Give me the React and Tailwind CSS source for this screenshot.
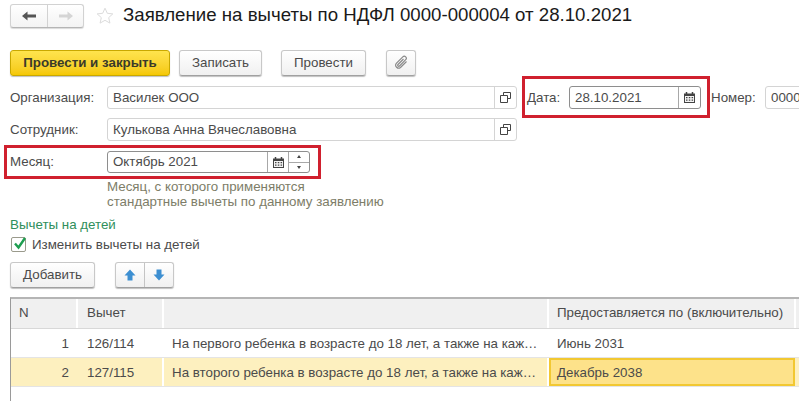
import React from "react";

const btn =
    "flex h-[26px] items-center justify-center rounded-[3px] border border-[#c8c8c8] border-b-[#a0a0a0] bg-gradient-to-b from-white to-[#f0f0f0] pb-[2px] text-[#4b4b4b] shadow-[0_1px_1px_rgba(0,0,0,0.25)]";

const CalendarIcon = () => (
    <svg width="13" height="13" viewBox="0 0 13 13" fill="none">
        <path d="M1 2.500h11v9.500H1z" fill="#444" />
        <path d="M3.500 1v2.500M9.500 1v2.500" stroke="#444" strokeWidth="1.500" />
        <path d="M2 5h9v6H2z" fill="#f4f4f4" />
        <path
            d="M3 6h1.500v1.300H3zM5.800 6h1.500v1.300H5.800zM8.600 6h1.500v1.300H8.600zM3 8.500h1.500v1.300H3zM5.800 8.500h1.500v1.300H5.800zM8.600 8.500h1.500v1.300H8.600z"
            fill="#444"
        />
    </svg>
);

const CopyIcon = () => (
    <svg width="11" height="11" viewBox="0 0 11 11" fill="none" stroke="#444" strokeWidth="1">
        <path d="M3.500 3V.5h7v6H8" />
        <path d="M.5 3.500h7v7h-7z" />
    </svg>
);

const TextField = ({ value, className = "" }) => (
    <div className={`flex h-[23px] shrink-0 items-center rounded-[3px] border border-[#d4d4d4] bg-white ${className}`}>
        <span className="flex-1 overflow-hidden whitespace-nowrap pb-[1px] pl-[5px] text-[#4b4b4b]">{value}</span>
        <span className="flex h-full w-[22px] items-center justify-center border-l border-[#d4d4d4]">
            <CopyIcon />
        </span>
    </div>
);

const ArrowButton = ({ up }) => (
    <span className="flex h-full flex-1 items-center justify-center">
        <svg width="12" height="12" viewBox="0 0 12 12" fill="#3d8fd1" className={up ? "" : "rotate-180"}>
            <path d="M6 0.500L11.500 6.500H8.500V11.500H3.500V6.500H0.500z" />
        </svg>
    </span>
);

const rows = [
    { n: 1, code: "126/114", text: "На первого ребенка в возрасте до 18 лет, а также на каж…", until: "Июнь 2031" },
    { n: 2, code: "127/115", text: "На второго ребенка в возрасте до 18 лет, а также на каж…", until: "Декабрь 2038", active: true },
];

const App = () => {
    return (
        <div
            className="relative h-[401px] w-[799px] overflow-hidden bg-white pl-[10px] text-[13.33px] leading-[15px] text-[#4b4b4b]"
            style={{ fontFamily: '"Liberation Sans", Arial, sans-serif' }}
        >
            {/* Title row */}
            <div className="flex h-[28px] items-center pt-[4px]">
                <div className="flex h-[24px] w-[74px] shrink-0 rounded-[3px] border border-[#d2d2d2] border-b-[#b5b5b5] bg-gradient-to-b from-white to-[#f3f3f3] shadow-[0_1px_1px_rgba(0,0,0,0.15)]">
                    <span className="flex w-[37px] items-center justify-center border-r border-[#d2d2d2]">
                        <svg width="14" height="10" viewBox="0 0 14 10" fill="#555">
                            <path d="M0 5l5.500-4.500V3.500H14v3H5.500v3z" />
                        </svg>
                    </span>
                    <span className="flex flex-1 items-center justify-center">
                        <svg width="14" height="10" viewBox="0 0 14 10" fill="#d5d5d5">
                            <path d="M14 5L8.500.5V3.500H0v3h8.500v3z" />
                        </svg>
                    </span>
                </div>
                <svg width="18" height="18" viewBox="0 0 18 18" fill="none" stroke="#dcdcdc" className="ml-[12px] shrink-0">
                    <path d="M9 1.200l2.300 5.100 5.500.6-4.100 3.700 1.200 5.500L9 13.300l-4.900 2.800 1.200-5.500L1.200 6.900l5.500-.6z" />
                </svg>
                <h1 className="mb-[2px] ml-[9px] whitespace-nowrap text-[18.67px] font-normal leading-[24px] text-[#1a1a1a]">
                    Заявление на вычеты по НДФЛ 0000-000004 от 28.10.2021
                </h1>
            </div>

            {/* Command bar */}
            <div className="mt-[22px] flex h-[26px]">
                <div className="flex h-[26px] w-[160px] items-center justify-center rounded-[3px] border border-[#c9a800] bg-gradient-to-b from-[#ffe44d] to-[#f5c800] pb-[2px] font-bold text-[#3a3a2a] shadow-[0_1px_1px_rgba(0,0,0,0.25)]">
                    Провести и закрыть
                </div>
                <div className={`${btn} ml-[9px] w-[83px]`}>Записать</div>
                <div className={`${btn} ml-[19px] w-[85px]`}>Провести</div>
                <div className={`${btn} ml-[20px] w-[30px] !pb-0`}>
                    <svg width="16" height="16" viewBox="0 0 16 16" fill="none" stroke="#8a8a8a" strokeWidth="1.200">
                        <path d="M13.500 6.500L7.500 12.500a3 3 0 0 1-4.200-4.200L9.800 1.800a2 2 0 0 1 2.900 2.900L6.500 11a1 1 0 0 1-1.500-1.500L10.500 4" />
                    </svg>
                </div>
            </div>

            {/* Organisation row */}
            <div className="mt-[10px] flex h-[23px] items-center">
                <span className="w-[97px] shrink-0 pb-[1px]">Организация:</span>
                <TextField value="Василек ООО" className="w-[410px]" />
                <span className="ml-[10px] w-[42px] shrink-0 pb-[1px]">Дата:</span>
                <div className="flex h-[23px] w-[132px] shrink-0 items-center rounded-[3px] border border-[#8e8e8e]">
                    <span className="flex-1 pb-[1px] pl-[5px]">28.10.2021</span>
                    <span className="flex h-full w-[22px] items-center justify-center border-l border-[#a8a8a8]">
                        <CalendarIcon />
                    </span>
                </div>
                <span className="ml-[10px] w-[54px] shrink-0 pb-[1px]">Номер:</span>
                <div className="flex h-[23px] w-[60px] shrink-0 items-center rounded-l-[3px] border border-[#d4d4d4] pb-[1px] pl-[5px]">
                    0000
                </div>
            </div>

            {/* Employee row */}
            <div className="mt-[9px] flex h-[23px] items-center">
                <span className="w-[97px] shrink-0 pb-[1px]">Сотрудник:</span>
                <TextField value="Кулькова Анна Вячеславовна" className="w-[410px]" />
            </div>

            {/* Month row */}
            <div className="mt-[10px] flex h-[22px] items-center">
                <span className="w-[97px] shrink-0 pb-[2px]">Месяц:</span>
                <div className="flex h-[22px] w-[203px] shrink-0 items-center rounded-[3px] border border-[#8e8e8e]">
                    <span className="flex-1 pb-[1px] pl-[5px]">Октябрь 2021</span>
                    <span className="flex h-full w-[21px] items-center justify-center border-l border-[#a8a8a8]">
                        <CalendarIcon />
                    </span>
                    <span className="flex h-full w-[21px] flex-col border-l border-[#a8a8a8]">
                        <span className="flex flex-1 items-center justify-center border-b border-[#a8a8a8]">
                            <span className="h-0 w-0 border-x-[2.500px] border-b-[3px] border-x-transparent border-b-[#444]" />
                        </span>
                        <span className="flex flex-1 items-center justify-center">
                            <span className="h-0 w-0 border-x-[2.500px] border-t-[3px] border-x-transparent border-t-[#444]" />
                        </span>
                    </span>
                </div>
            </div>

            <p className="ml-[97px] mt-[6px] text-[#7d7d68]">
                Месяц, с которого применяются
                <br />
                стандартные вычеты по данному заявлению
            </p>

            <div className="mt-[8px] text-[#2f8f5b]">Вычеты на детей</div>

            <label className="mt-[5px] flex h-[15px] items-center">
                <span className="relative ml-[1px] h-[15px] w-[15px] shrink-0 rounded-[2px] border border-[#9a9a8c] bg-white">
                    <svg width="16" height="15" viewBox="0 0 16 15" fill="none" stroke="#1e9e50" strokeWidth="2.400" className="absolute left-[0px] top-[-2px]">
                        <path d="M3 7.500l3.500 4L13 2" />
                    </svg>
                </span>
                <span className="ml-[6px]">Изменить вычеты на детей</span>
            </label>

            {/* Table buttons */}
            <div className="mt-[10px] flex h-[26px]">
                <div className={`${btn} w-[85px]`}>Добавить</div>
                <div className={`${btn} ml-[20px] w-[59px] !pb-0`}>
                    <div className="flex h-full w-full divide-x divide-[#c4c4c4]">
                        <ArrowButton up />
                        <ArrowButton />
                    </div>
                </div>
            </div>

            {/* Table */}
            <div className="mt-[9px] h-[120px] w-[800px] border-l border-t-2 border-[#b5b5b5] border-l-[#9a9a9a]">
                <div className="flex h-[30px] border-b border-[#d8d8d8] bg-[#f0f0f0]">
                    <div className="flex w-[67px] items-center border-r-2 border-white pb-[2px] pl-[8px]">N</div>
                    <div className="flex w-[86px] items-center border-r-2 border-white pb-[2px] pl-[9px]">Вычет</div>
                    <div className="w-[385px] border-r-2 border-white" />
                    <div className="flex w-[247px] items-center whitespace-nowrap border-r-2 border-white pb-[2px] pl-[8px]">
                        Предоставляется по (включительно)
                    </div>
                </div>
                {rows.map((row) => (
                    <div
                        key={row.n}
                        className={`flex h-[29px] border-b border-[#e4e4e4] ${row.active ? "bg-[#fdf0bf]" : "bg-white"}`}
                    >
                        <div className="flex w-[67px] items-center justify-end border-r-2 border-transparent pr-[7px]">
                            {row.n}
                        </div>
                        <div className="flex w-[86px] items-center border-r-2 border-white pl-[9px]">{row.code}</div>
                        <div className="flex w-[385px] items-center overflow-hidden whitespace-nowrap border-r-2 border-white pl-[8px]">
                            {row.text}
                        </div>
                        {row.active ? (
                            <div className="flex w-[246px] items-center border-2 border-[#f2c832] bg-[#fde28a] pl-[6px]">
                                {row.until}
                            </div>
                        ) : (
                            <div className="flex w-[246px] items-center pl-[8px]">{row.until}</div>
                        )}
                    </div>
                ))}
            </div>

            {/* Red highlight frames laid over the form */}
            <div className="absolute left-[522px] top-[76px] h-[42px] w-[188px] border-[3px] border-[#d0202e]" />
            <div className="absolute left-[4px] top-[145px] h-[34px] w-[317px] border-[3px] border-[#d0202e]" />
        </div>
    );
};

export default App;
